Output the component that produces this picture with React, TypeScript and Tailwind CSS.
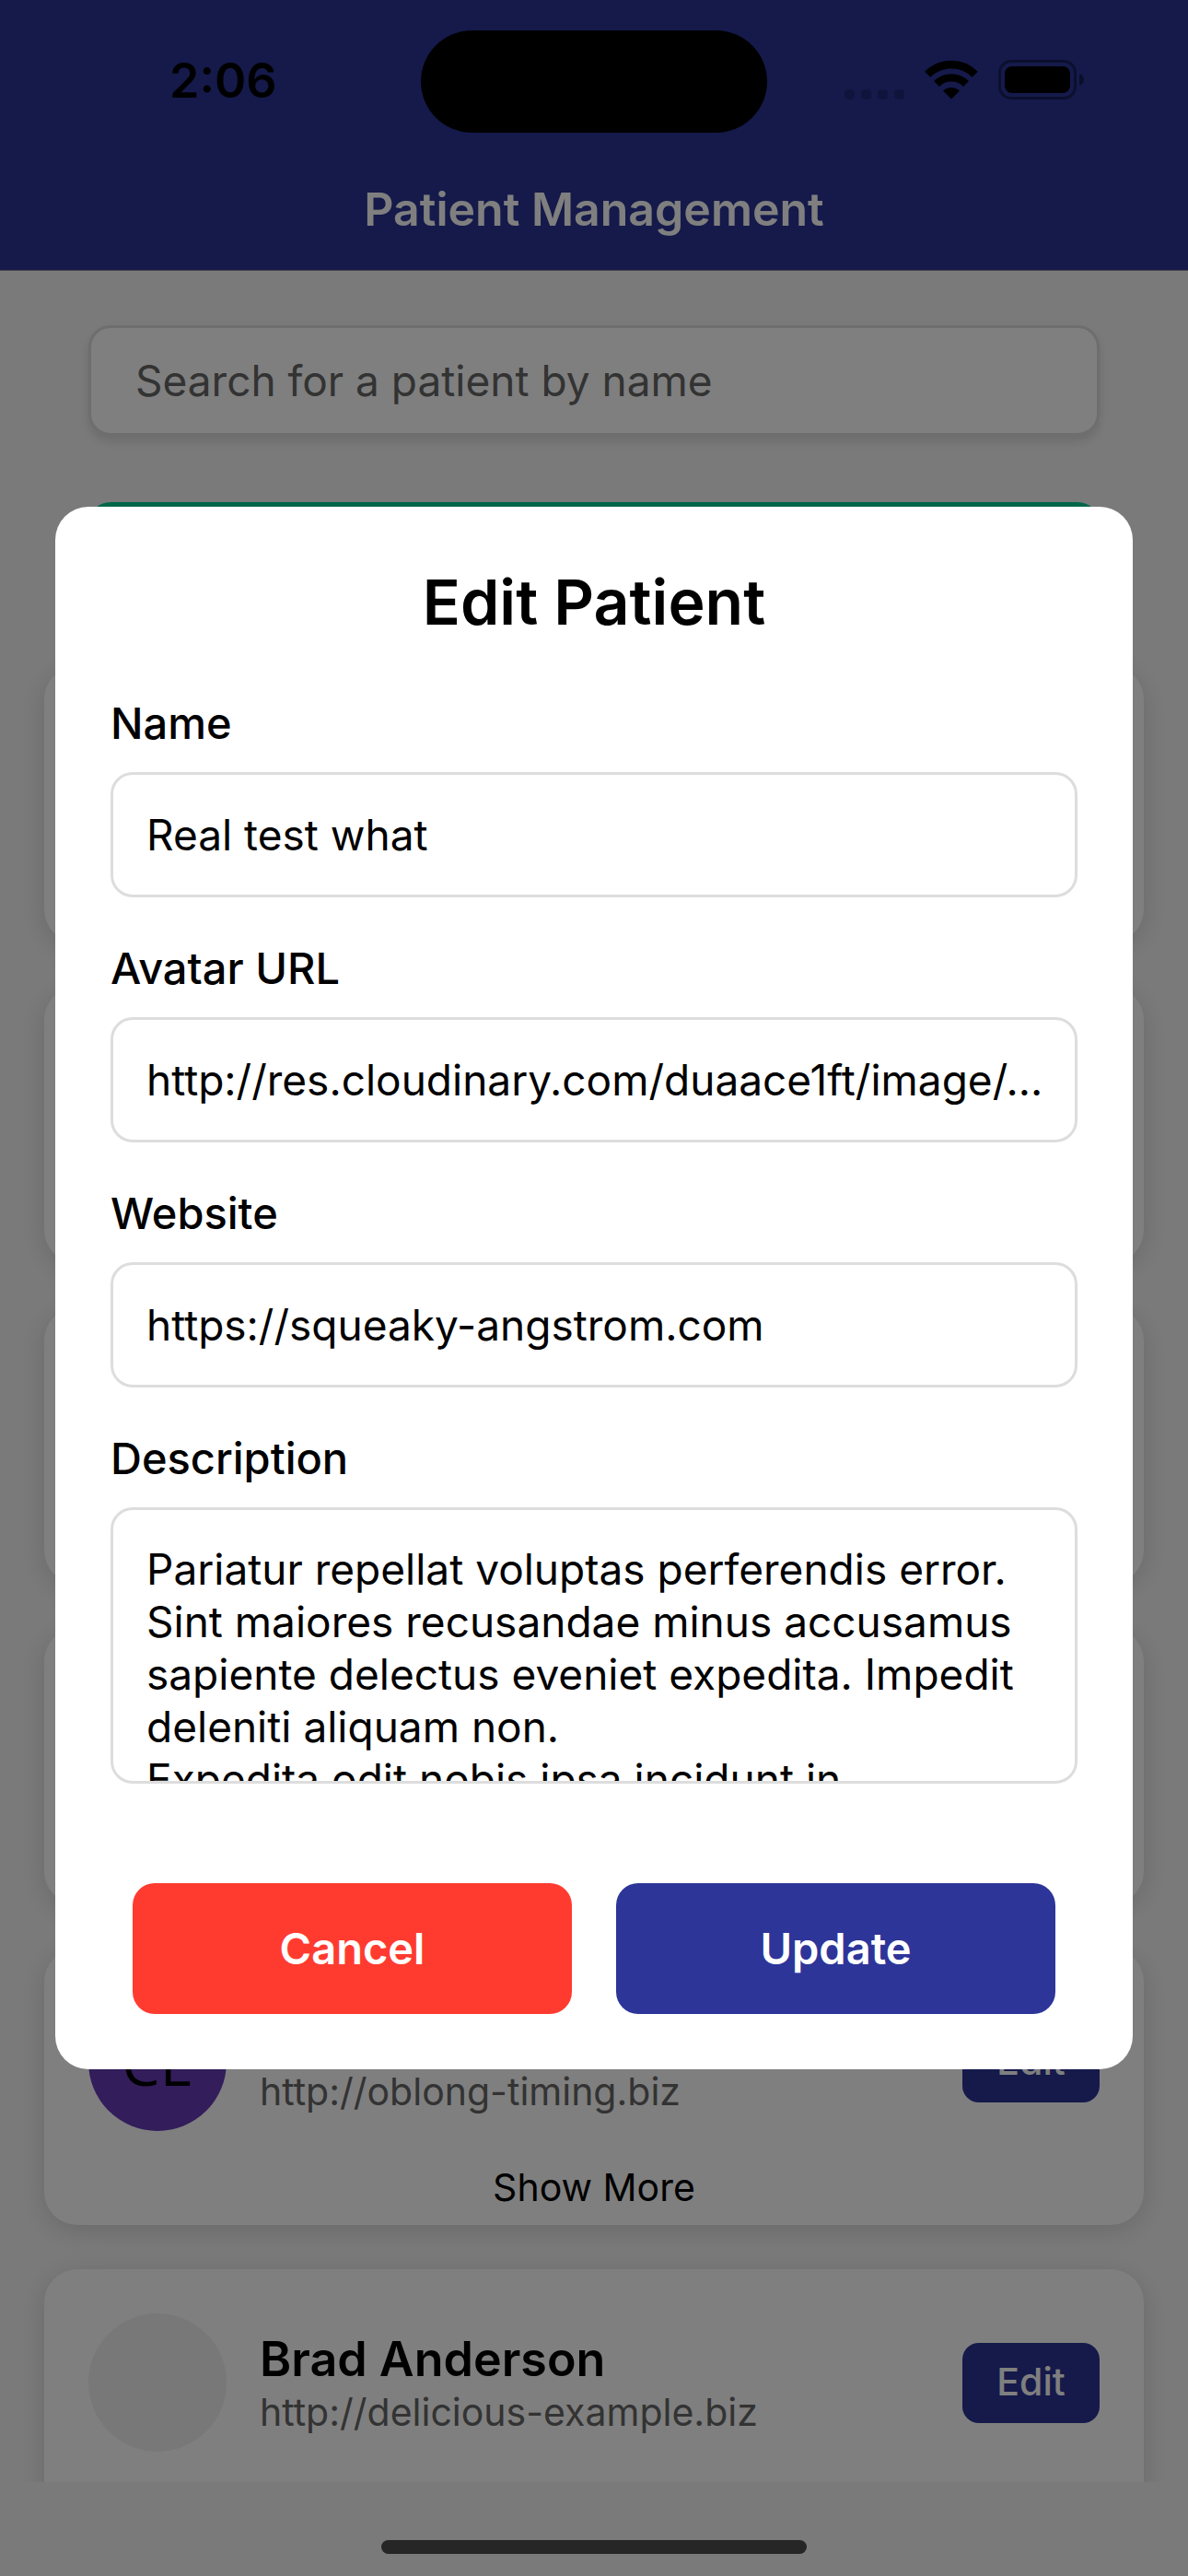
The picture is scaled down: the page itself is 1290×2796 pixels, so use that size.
import { useState } from "react";

type Patient = {
  id: number;
  name?: string;
  website?: string;
  initials?: string;
  expandable?: boolean;
};

const patients: Patient[] = [
  { id: 1 },
  { id: 2 },
  { id: 3 },
  { id: 4 },
  { id: 5, website: "http://oblong-timing.biz", initials: "CE", expandable: true },
  { id: 6, name: "Brad Anderson", website: "http://delicious-example.biz" },
];

const description =
  "Pariatur repellat voluptas perferendis error. Sint maiores recusandae minus accusamus sapiente delectus eveniet expedita. Impedit deleniti aliquam non.\nExpedita odit nobis ipsa incidunt in";

function WifiIcon() {
  return (
    <svg viewBox="0 0 58 43" className="h-[43px] w-[58px]" fill="none" aria-hidden="true">
      <path d="M3.3 15.7A36.4 36.4 0 0 1 54.7 15.7" stroke="#000" strokeWidth="8.6" />
      <path d="M13 26A22.6 22.6 0 0 1 45 26" stroke="#000" strokeWidth="8.4" />
      <path d="M29 42.6L20 33.6A12.8 12.8 0 0 1 38 33.6Z" fill="#000" />
    </svg>
  );
}

function BatteryIcon() {
  return (
    <svg viewBox="0 0 94 43" className="h-[43px] w-[94px]" fill="none" aria-hidden="true">
      <rect x="1.5" y="1.5" width="82" height="40" rx="12.5" stroke="#000" strokeOpacity="0.4" strokeWidth="3" />
      <rect x="7" y="7" width="71" height="29" rx="8" fill="#000" />
      <path d="M88 15c3 .8 5 3.500 5 6.500s-2 5.700-5 6.500z" fill="#000" fillOpacity="0.45" />
    </svg>
  );
}

function StatusBar() {
  return (
    <div className="grid h-[161px] grid-cols-[1fr_376px_1fr] items-start pt-[33px]">
      <div className="pt-[20px] pl-[184px] text-[52px] leading-[70px] font-semibold text-black">2:06</div>
      <div className="h-[111px] rounded-full bg-black" />
      <div className="flex items-end justify-end gap-[22px] pt-[32px] pr-[112px]">
        <div className="flex gap-[7px]">
          <span className="size-[11px] rounded-[4px] bg-black/20" />
          <span className="size-[11px] rounded-[4px] bg-black/20" />
          <span className="size-[11px] rounded-[4px] bg-black/20" />
          <span className="size-[11px] rounded-[4px] bg-black/20" />
        </div>
        <WifiIcon />
        <BatteryIcon />
      </div>
    </div>
  );
}

function PatientCard({ patient }: { patient: Patient }) {
  return (
    <li className="h-[300px] shrink-0 rounded-[36px] bg-white px-12 pt-12 shadow-[0_6px_30px_rgba(0,0,0,0.14)]">
      {patient.website && (
        <>
          <div className="flex items-center gap-9">
            <div
              className={
                patient.initials
                  ? "flex size-[150px] items-center justify-center rounded-full bg-[#673ab7] font-['Open_Sans',sans-serif] text-[66px] leading-none font-medium text-black"
                  : "size-[150px] rounded-full bg-[#f0f0f0]"
              }
            >
              {patient.initials}
            </div>
            <div className="flex-1">
              <div className="h-[64px] text-[52px] leading-[64px] font-semibold text-black">{patient.name}</div>
              <a href={patient.website} className="block text-[41px] leading-[50px] text-[#666]">
                {patient.website}
              </a>
            </div>
            <button
              type="button"
              className="h-[87px] w-[149px] rounded-[18px] bg-[#2a3496] text-[41px] font-medium text-white"
            >
              Edit
            </button>
          </div>
          {patient.expandable && (
            <button type="button" className="mt-9 w-full text-center text-[41px] leading-[50px] text-black">
              Show More
            </button>
          )}
        </>
      )}
    </li>
  );
}

const fieldClass =
  "w-full rounded-[24px] border-[3px] border-[#ddd] bg-white pl-9 text-[46px] text-black outline-none";

function Field({ id, label, initial }: { id: string; label: string; initial: string }) {
  const [value, setValue] = useState(initial);
  return (
    <div className="mb-12">
      <label htmlFor={id} className="mb-6 block text-[47px] leading-[58px] font-medium">
        {label}
      </label>
      <input
        id={id}
        type="text"
        value={value}
        onChange={(e) => setValue(e.target.value)}
        className={`${fieldClass} h-[136px] pr-4 text-ellipsis`}
      />
    </div>
  );
}

function EditDialog() {
  const [text, setText] = useState(description);
  return (
    <div className="fixed inset-0 flex items-center justify-center bg-black/50 px-[60px]">
      <form
        role="dialog"
        aria-labelledby="dialog-title"
        onSubmit={(e) => e.preventDefault()}
        className="w-full rounded-[36px] bg-white p-[60px] text-black"
      >
        <h2 id="dialog-title" className="mb-[60px] text-center text-[68px] leading-[86px] font-semibold">
          Edit Patient
        </h2>
        <Field id="name" label="Name" initial="Real test what" />
        <Field id="avatar" label="Avatar URL" initial="http://res.cloudinary.com/duaace1ft/image/…" />
        <Field id="website" label="Website" initial="https://squeaky-angstrom.com" />
        <label htmlFor="description" className="mb-6 block text-[47px] leading-[58px] font-medium">
          Description
        </label>
        <textarea
          id="description"
          value={text}
          onChange={(e) => setText(e.target.value)}
          className={`${fieldClass} block h-[300px] resize-none overflow-hidden pt-9 pr-9 leading-[57px]`}
        />
        <div className="mt-[108px] grid grid-cols-2 gap-12 px-6">
          <button
            type="button"
            className="h-[142px] rounded-[24px] bg-[#ff3b30] text-[47px] font-semibold text-white"
          >
            Cancel
          </button>
          <button
            type="submit"
            className="h-[142px] rounded-[24px] bg-[#2d3599] text-[47px] font-semibold text-white"
          >
            Update
          </button>
        </div>
      </form>
    </div>
  );
}

export default function App() {
  return (
    <div className="flex h-screen flex-col overflow-hidden bg-[#f5f5f5] font-['Inter',sans-serif]">
      <header className="shrink-0 border-b border-[#8f8f99] bg-[#2a3496]">
        <StatusBar />
        <h1 className="text-center text-[50px] leading-[132px] font-semibold text-white">Patient Management</h1>
      </header>
      <main className="flex min-h-0 flex-1 flex-col overflow-hidden px-12 pt-[59px]">
        <div className="flex flex-col gap-[72px] px-12">
          <input
            type="search"
            aria-label="Search for a patient by name"
            placeholder="Search for a patient by name"
            className="h-[120px] w-full rounded-[24px] border-[3px] border-[#ddd] bg-white px-12 text-[46px] text-black shadow-[0_6px_12px_rgba(0,0,0,0.12)] outline-none placeholder:text-[#666]"
          />
          <button type="button" aria-label="Add patient" className="h-[118px] rounded-[24px] bg-[#00cc94]" />
        </div>
        <ul className="mt-[60px] flex flex-col gap-12">
          {patients.map((p) => (
            <PatientCard key={p.id} patient={p} />
          ))}
        </ul>
      </main>
      <footer className="flex h-[102px] shrink-0 justify-center pt-[63px]">
        <div className="h-[15px] w-[462px] rounded-full bg-[#4c4c4c]" />
      </footer>
      <EditDialog />
    </div>
  );
}
